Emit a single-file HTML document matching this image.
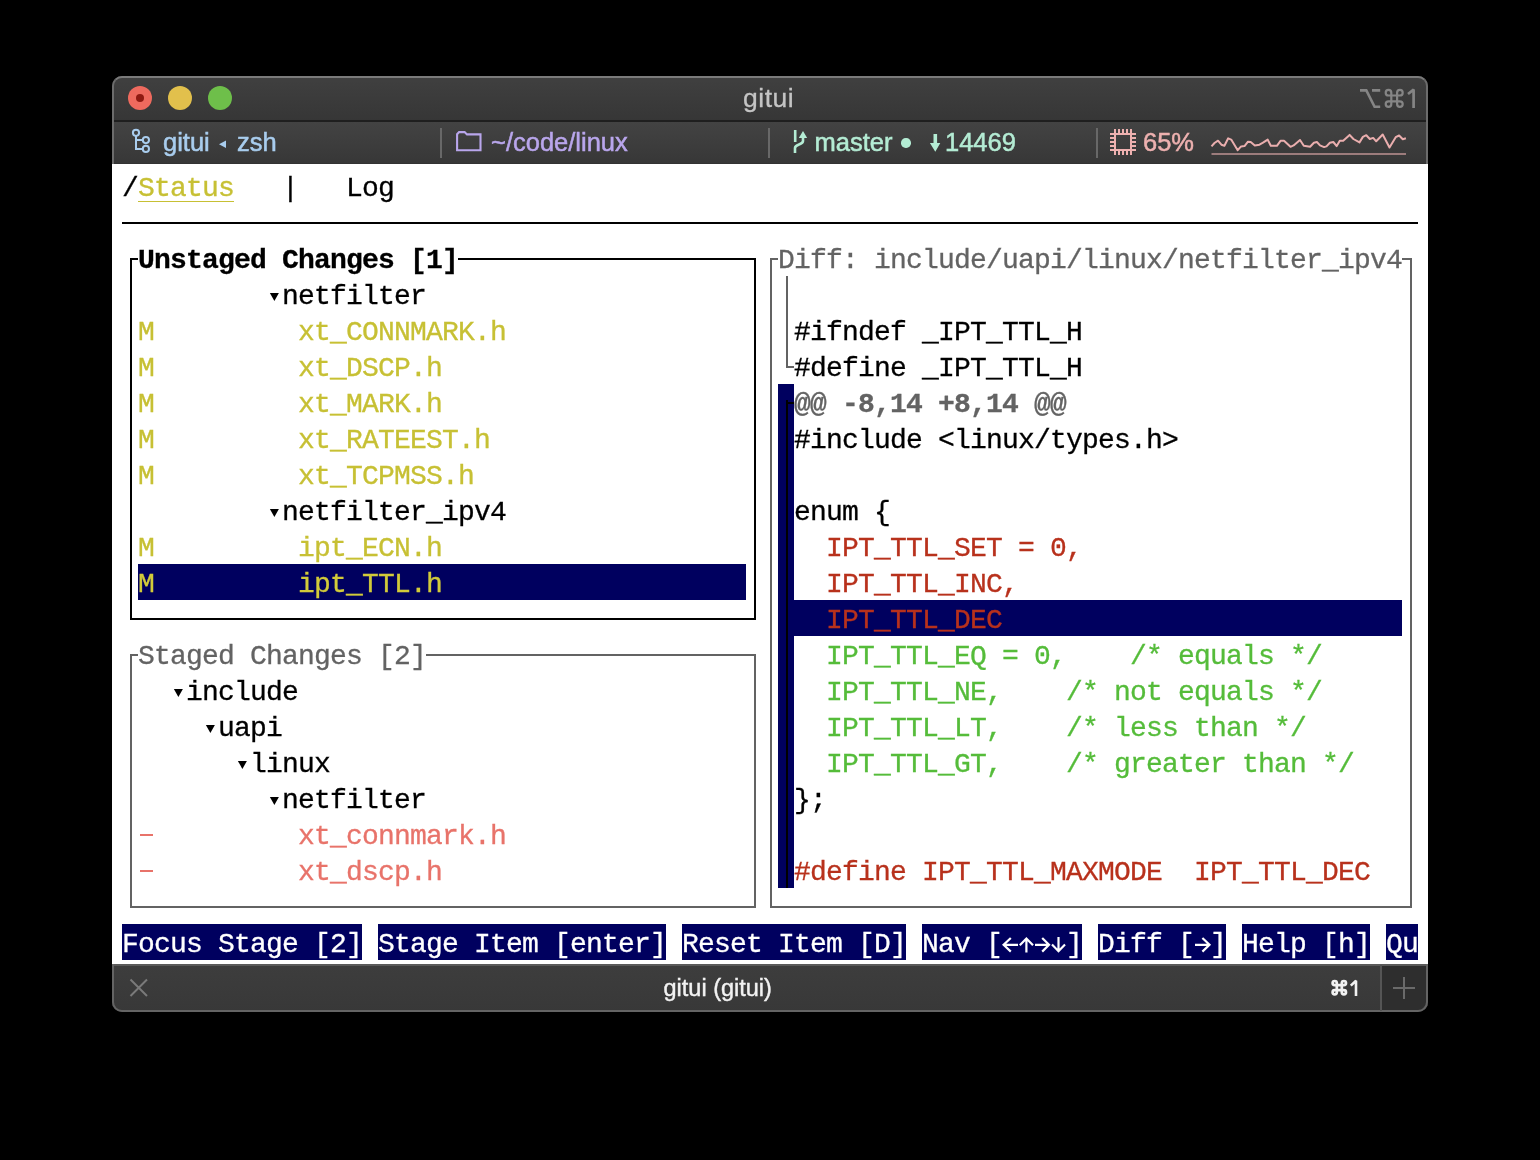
<!DOCTYPE html>
<html><head><meta charset="utf-8">
<style>
html,body{margin:0;padding:0;background:#000;width:1540px;height:1160px;overflow:hidden;}
body{position:relative;will-change:transform;font-family:"Liberation Sans",sans-serif;}
.r{position:absolute;height:36px;line-height:36px;white-space:pre;font-family:"Liberation Mono",monospace;font-size:28px;letter-spacing:-0.8px;-webkit-text-stroke:0.3px currentColor;}
.win{position:absolute;left:112px;top:76px;width:1316px;height:936px;border-radius:10px;overflow:hidden;background:#3a3a3a;}
.frame{position:absolute;box-sizing:border-box;pointer-events:none;}
.sb{position:absolute;font-size:24px;line-height:30px;white-space:pre;}
.tb{top:127px;font-size:25.5px;-webkit-text-stroke:0.5px currentColor;}
</style></head><body>
<div class="win">
  <div style="position:absolute;left:0;top:0;width:1316px;height:45px;background:linear-gradient(#404040,#363636);"></div>
  <div style="position:absolute;left:0;top:44px;width:1316px;height:2px;background:#1f1f1f;"></div>
  <div style="position:absolute;left:0;top:46px;width:1316px;height:42px;background:linear-gradient(#434343,#373737);"></div>
  <div style="position:absolute;left:0;top:87px;width:1316px;height:1px;background:#333;"></div>
  <div style="position:absolute;left:0;top:88px;width:1316px;height:800px;background:#ffffff;"></div>
  <div style="position:absolute;left:0;top:888px;width:1316px;height:48px;background:linear-gradient(#3d3d3d,#383838);border-top:2px solid #5a5a5a;box-sizing:border-box;"></div>
  <div style="position:absolute;left:1270px;top:890px;width:46px;height:46px;background:#2e2e2e;"></div>
</div>
<div class="frame" style="left:112px;top:76px;width:1316px;height:88px;border:2px solid #6c6c6c;border-top-color:#7a7a7a;border-bottom:none;border-radius:10px 10px 0 0;"></div>
<div class="frame" style="left:112px;top:964px;width:1316px;height:48px;border:2px solid #646464;border-top:none;border-radius:0 0 10px 10px;"></div>
<!-- traffic lights -->
<div style="position:absolute;left:128px;top:86px;width:24px;height:24px;border-radius:50%;background:#ee6a5e;"></div>
<div style="position:absolute;left:136px;top:94px;width:8px;height:8px;border-radius:50%;background:#8f1a12;"></div>
<div style="position:absolute;left:168px;top:86px;width:24px;height:24px;border-radius:50%;background:#e2c04c;"></div>
<div style="position:absolute;left:208px;top:86px;width:24px;height:24px;border-radius:50%;background:#6ebf4a;"></div>
<div class="sb" style="left:743px;top:83px;font-size:26.5px;letter-spacing:0.5px;color:#c4c4c4;-webkit-text-stroke:0.3px currentColor;">gitui</div>
<svg style="position:absolute;left:0;top:0" width="1540" height="1160" fill="none">
<path d="M1360,90.4 H1366.3 L1374.6,106.8 H1380.2 M1372,90.4 H1380.2" stroke="#858585" stroke-width="2.6"/>
<path d="M1391.3,92.7 A2.8,2.8 0 1 0 1388.5,95.5 H1399.8999999999999 A2.8,2.8 0 1 0 1397.1,92.7 V104.1 A2.8,2.8 0 1 0 1399.8999999999999,101.3 H1388.5 A2.8,2.8 0 1 0 1391.3,104.1 Z" stroke="#858585" stroke-width="2.2"/>
<path d="M1408,94 L1413.6,89.6 V108.1" stroke="#858585" stroke-width="2.7" stroke-linejoin="bevel"/>
<path d="M1336.8,983.1 A2.1,2.1 0 1 0 1334.7,985.2 H1343.8999999999999 A2.1,2.1 0 1 0 1341.8,983.1 V992.3000000000001 A2.1,2.1 0 1 0 1343.8999999999999,990.2 H1334.7 A2.1,2.1 0 1 0 1336.8,992.3000000000001 Z" stroke="#f2f2f2" stroke-width="2.7"/>
<path d="M1350.8,985.6 L1356,980.8 V996.1" stroke="#f2f2f2" stroke-width="2.6" stroke-linejoin="bevel"/>
</svg>
<!-- status bar -->
<div class="sb tb" style="left:163px;color:#a9cdee;">gitui</div>
<div class="sb tb" style="left:237px;color:#a9cdee;">zsh</div>
<svg style="position:absolute;left:0;top:0" width="1540" height="1160"><path d="M219 144.2 L226 140.5 V148 Z" fill="#a9cdee"/></svg>
<div class="sb tb" style="left:491px;color:#b9a6ec;">~/code/linux</div>
<div class="sb tb" style="left:814.5px;color:#b4ecd4;">master</div>
<div style="position:absolute;left:901.3px;top:138.3px;width:9.4px;height:9.4px;border-radius:50%;background:#b4ecd4;"></div>
<svg style="position:absolute;left:0;top:0" width="1540" height="1160"><path d="M933.5 134 H937.1 V143 H940.3 L935.3 151.8 L929.9 143 H933.5 Z" fill="#b4ecd4"/></svg>
<div class="sb tb" style="left:945px;color:#b4ecd4;">14469</div>
<div class="sb tb" style="left:1143px;color:#eeb1b0;">65%</div>
<div style="position:absolute;left:440px;top:128px;width:2px;height:30px;background:#686868;"></div>
<div style="position:absolute;left:768px;top:128px;width:2px;height:30px;background:#686868;"></div>
<div style="position:absolute;left:1096px;top:128px;width:2px;height:30px;background:#686868;"></div>

<svg style="position:absolute;left:0;top:0" width="1540" height="1160" viewBox="0 0 1540 1160">
  <!-- tree icon -->
  <g fill="none" stroke="#a9cdee" stroke-width="2">
    <circle cx="136" cy="132.8" r="3.1"/>
    <circle cx="145.9" cy="140.1" r="3.1"/>
    <circle cx="145.9" cy="148.9" r="3.1"/>
    <path d="M136 136 V148.9 H142.8 M136 140.1 H142.8"/>
  </g>
  <!-- folder -->
  <path d="M457.1 150.3 V134.2 L459.1 132.1 H464.6 L467 134.4 H480.5 V150.3 Z" fill="none" stroke="#b9a6ec" stroke-width="2.1"/>
  <!-- branch -->
  <g fill="none" stroke="#b4ecd4" stroke-width="2.6">
    <path d="M795.2 130 V142"/>
    <path d="M795 153 V148 C795 144 803 145 803 141 V137"/>
  </g>
  <path d="M803 131 L807.2 138 H798.8 Z" fill="#b4ecd4"/>
  <!-- cpu -->
  <g fill="#eeb1b0">
    <path d="M1114 133 H1132 V151 H1114 Z M1116 135 V149 H1130 V135 Z" fill-rule="evenodd"/>
    <rect x="1114" y="129" width="2" height="4"/><rect x="1118" y="129" width="2" height="4"/><rect x="1122" y="129" width="2" height="4"/><rect x="1126" y="129" width="2" height="4"/><rect x="1130" y="129" width="2" height="4"/>
    <rect x="1114" y="151" width="2" height="4"/><rect x="1118" y="151" width="2" height="4"/><rect x="1122" y="151" width="2" height="4"/><rect x="1126" y="151" width="2" height="4"/><rect x="1130" y="151" width="2" height="4"/>
    <rect x="1110" y="133" width="4" height="2"/><rect x="1110" y="137" width="4" height="2"/><rect x="1110" y="141" width="4" height="2"/><rect x="1110" y="145" width="4" height="2"/><rect x="1110" y="149" width="4" height="2"/>
    <rect x="1132" y="133" width="4" height="2"/><rect x="1132" y="137" width="4" height="2"/><rect x="1132" y="141" width="4" height="2"/><rect x="1132" y="145" width="4" height="2"/><rect x="1132" y="149" width="4" height="2"/>
  </g>
  <!-- sparkline -->
  <rect x="1211.5" y="153" width="194.5" height="2" fill="#9c7c7c"/>
  <polyline fill="none" stroke="#eaaeae" stroke-width="2" stroke-linejoin="round" points="1211.5,146.4 1214.5,143 1218,140.7 1221.4,144.7 1224.4,145.8 1228.2,138.3 1231.2,139.6 1237.7,150.2 1241.1,146.4 1244.5,146.1 1248,141.7 1250.7,142 1254.8,145.4 1259.5,144.7 1263,142.7 1267.7,139.6 1270.8,145.8 1276.9,145.8 1280.7,140.7 1284,140.7 1290.5,146.8 1293.6,145.4 1300,140 1303.8,145.8 1310.1,146.8 1313.9,142.7 1316.9,142 1320,145.4 1324.1,147.1 1326.5,146.4 1329.9,142.7 1333.3,142 1336.7,146.1 1339.8,140.7 1343.2,140.7 1349.6,134.9 1353.4,139 1359.5,142.4 1362.9,136.9 1366.3,135.2 1369.8,139 1373.2,137.9 1376.2,141.3 1382.7,134.5 1389.5,147.5 1395.7,137.2 1399.1,135.5 1402.8,139.3 1405.9,138.3"/>
  <!-- bottom x and + -->
  <path d="M130.5 979.5 L147 996 M147 979.5 L130.5 996" stroke="#7a7a7a" stroke-width="2"/>
  <path d="M1404 977 V999 M1393 988 H1415" stroke="#6a6a6a" stroke-width="2"/>
</svg>

<!-- bottom bar -->
<div class="sb" style="left:663.5px;top:973px;font-size:23.5px;color:#f2f2f2;-webkit-text-stroke:0.4px currentColor;">gitui (gitui)</div>

<div style="position:absolute;left:1380px;top:965px;width:2px;height:46px;background:#555;"></div>
<div class="r" style="left:122px;top:170.5px"><span style="color:#000000;">/</span><span style="color:#c7c034;">Status</span><span style="color:#000000;">   |   </span><span style="color:#000000;">Log</span></div>
<div style="position:absolute;left:122px;top:222px;width:1296px;height:2px;background:#000000;"></div>
<div style="position:absolute;left:138px;top:201px;width:96px;height:1.2px;background:#c7c034;"></div>
<div style="position:absolute;left:130px;top:258px;width:626px;height:2px;background:#000000;"></div>
<div style="position:absolute;left:130px;top:618px;width:626px;height:2px;background:#000000;"></div>
<div style="position:absolute;left:130px;top:258px;width:2px;height:362px;background:#000000;"></div>
<div style="position:absolute;left:754px;top:258px;width:2px;height:362px;background:#000000;"></div>
<div style="position:absolute;left:130px;top:654px;width:626px;height:2px;background:#636363;"></div>
<div style="position:absolute;left:130px;top:906px;width:626px;height:2px;background:#636363;"></div>
<div style="position:absolute;left:130px;top:654px;width:2px;height:254px;background:#636363;"></div>
<div style="position:absolute;left:754px;top:654px;width:2px;height:254px;background:#636363;"></div>
<div style="position:absolute;left:770px;top:258px;width:642px;height:2px;background:#636363;"></div>
<div style="position:absolute;left:770px;top:906px;width:642px;height:2px;background:#636363;"></div>
<div style="position:absolute;left:770px;top:258px;width:2px;height:650px;background:#636363;"></div>
<div style="position:absolute;left:1410px;top:258px;width:2px;height:650px;background:#636363;"></div>
<div style="position:absolute;left:138px;top:564px;width:608px;height:36px;background:#00005f;"></div>
<div style="position:absolute;left:794px;top:600px;width:608px;height:36px;background:#00005f;"></div>
<div style="position:absolute;left:778px;top:384px;width:16px;height:504px;background:#00005f;"></div>
<div style="position:absolute;left:138px;top:244px;width:320px;height:28px;background:#ffffff;"></div>
<div class="r" style="left:138px;top:242.5px"><span style="color:#000000;font-weight:bold;">Unstaged Changes [1]</span></div>
<div style="position:absolute;left:138px;top:640px;width:288px;height:28px;background:#ffffff;"></div>
<div class="r" style="left:138px;top:638.5px"><span style="color:#636363;">Staged Changes [2]</span></div>
<div style="position:absolute;left:778px;top:244px;width:624px;height:28px;background:#ffffff;"></div>
<div class="r" style="left:778px;top:242.5px"><span style="color:#636363;">Diff: include/uapi/linux/netfilter_ipv4</span></div>
<svg style="position:absolute;left:266px;top:276px" width="16" height="36"><path d="M3.9,16.9 H12.9 L8.4,25.1 Z" fill="#000"/></svg>
<div class="r" style="left:282px;top:278.5px"><span style="color:#000000;">netfilter</span></div>
<div class="r" style="left:138px;top:314.5px"><span style="color:#c7c034;">M</span><span style="color:#c7c034;">         xt_CONNMARK.h</span></div>
<div class="r" style="left:138px;top:350.5px"><span style="color:#c7c034;">M</span><span style="color:#c7c034;">         xt_DSCP.h</span></div>
<div class="r" style="left:138px;top:386.5px"><span style="color:#c7c034;">M</span><span style="color:#c7c034;">         xt_MARK.h</span></div>
<div class="r" style="left:138px;top:422.5px"><span style="color:#c7c034;">M</span><span style="color:#c7c034;">         xt_RATEEST.h</span></div>
<div class="r" style="left:138px;top:458.5px"><span style="color:#c7c034;">M</span><span style="color:#c7c034;">         xt_TCPMSS.h</span></div>
<svg style="position:absolute;left:266px;top:492px" width="16" height="36"><path d="M3.9,16.9 H12.9 L8.4,25.1 Z" fill="#000"/></svg>
<div class="r" style="left:282px;top:494.5px"><span style="color:#000000;">netfilter_ipv4</span></div>
<div class="r" style="left:138px;top:530.5px"><span style="color:#c7c034;">M</span><span style="color:#c7c034;">         ipt_ECN.h</span></div>
<div class="r" style="left:138px;top:566.5px"><span style="color:#d2cb3a;">M</span><span style="color:#d2cb3a;">         ipt_TTL.h</span></div>
<svg style="position:absolute;left:170px;top:672px" width="16" height="36"><path d="M3.9,16.9 H12.9 L8.4,25.1 Z" fill="#000"/></svg>
<div class="r" style="left:186px;top:674.5px"><span style="color:#000000;">include</span></div>
<svg style="position:absolute;left:202px;top:708px" width="16" height="36"><path d="M3.9,16.9 H12.9 L8.4,25.1 Z" fill="#000"/></svg>
<div class="r" style="left:218px;top:710.5px"><span style="color:#000000;">uapi</span></div>
<svg style="position:absolute;left:234px;top:744px" width="16" height="36"><path d="M3.9,16.9 H12.9 L8.4,25.1 Z" fill="#000"/></svg>
<div class="r" style="left:250px;top:746.5px"><span style="color:#000000;">linux</span></div>
<svg style="position:absolute;left:266px;top:780px" width="16" height="36"><path d="M3.9,16.9 H12.9 L8.4,25.1 Z" fill="#000"/></svg>
<div class="r" style="left:282px;top:782.5px"><span style="color:#000000;">netfilter</span></div>
<div style="position:absolute;left:140px;top:834px;width:12.6px;height:2px;background:#e8736a;"></div>
<div style="position:absolute;left:140px;top:870px;width:12.6px;height:2px;background:#e8736a;"></div>
<div class="r" style="left:298px;top:818.5px"><span style="color:#e8736a;">xt_connmark.h</span></div>
<div class="r" style="left:298px;top:854.5px"><span style="color:#e8736a;">xt_dscp.h</span></div>
<div style="position:absolute;left:786px;top:276px;width:2px;height:90px;background:#636363;"></div>
<div style="position:absolute;left:786px;top:366px;width:8px;height:2px;background:#636363;"></div>
<div style="position:absolute;left:786px;top:400px;width:2px;height:488px;background:#000000;"></div>
<div style="position:absolute;left:786px;top:402px;width:8px;height:2px;background:#000000;"></div>
<div class="r" style="left:794px;top:314.5px"><span style="color:#000000;">#ifndef _IPT_TTL_H</span></div>
<div class="r" style="left:794px;top:350.5px"><span style="color:#000000;">#define _IPT_TTL_H</span></div>
<div class="r" style="left:794px;top:386.5px"><span style="color:#636363;font-weight:bold;">@@ -8,14 +8,14 @@</span></div>
<div class="r" style="left:794px;top:422.5px"><span style="color:#000000;">#include &lt;linux/types.h&gt;</span></div>
<div class="r" style="left:794px;top:494.5px"><span style="color:#000000;">enum {</span></div>
<div class="r" style="left:794px;top:530.5px"><span style="color:#b8311c;">  IPT_TTL_SET = 0,</span></div>
<div class="r" style="left:794px;top:566.5px"><span style="color:#b8311c;">  IPT_TTL_INC,</span></div>
<div class="r" style="left:794px;top:602.5px"><span style="color:#b8311c;">  IPT_TTL_DEC</span></div>
<div class="r" style="left:794px;top:638.5px"><span style="color:#55bc3a;">  IPT_TTL_EQ = 0,    /* equals */</span></div>
<div class="r" style="left:794px;top:674.5px"><span style="color:#55bc3a;">  IPT_TTL_NE,    /* not equals */</span></div>
<div class="r" style="left:794px;top:710.5px"><span style="color:#55bc3a;">  IPT_TTL_LT,    /* less than */</span></div>
<div class="r" style="left:794px;top:746.5px"><span style="color:#55bc3a;">  IPT_TTL_GT,    /* greater than */</span></div>
<div class="r" style="left:794px;top:782.5px"><span style="color:#000000;">};</span></div>
<div class="r" style="left:794px;top:854.5px"><span style="color:#b8311c;">#define IPT_TTL_MAXMODE  IPT_TTL_DEC</span></div>
<div style="position:absolute;left:122px;top:924px;width:240px;height:36px;background:#00005f;"></div>
<div class="r" style="left:122px;top:926.5px"><span style="color:#ffffff;">Focus Stage [2]</span></div>
<div style="position:absolute;left:378px;top:924px;width:288px;height:36px;background:#00005f;"></div>
<div class="r" style="left:378px;top:926.5px"><span style="color:#ffffff;">Stage Item [enter]</span></div>
<div style="position:absolute;left:682px;top:924px;width:224px;height:36px;background:#00005f;"></div>
<div class="r" style="left:682px;top:926.5px"><span style="color:#ffffff;">Reset Item [D]</span></div>
<div style="position:absolute;left:922px;top:924px;width:160px;height:36px;background:#00005f;"></div>
<div class="r" style="left:922px;top:926.5px"><span style="color:#ffffff;">Nav [    ]</span></div>
<div style="position:absolute;left:1098px;top:924px;width:128px;height:36px;background:#00005f;"></div>
<div class="r" style="left:1098px;top:926.5px"><span style="color:#ffffff;">Diff [ ]</span></div>
<div style="position:absolute;left:1242px;top:924px;width:128px;height:36px;background:#00005f;"></div>
<div class="r" style="left:1242px;top:926.5px"><span style="color:#ffffff;">Help [h]</span></div>
<div style="position:absolute;left:1386px;top:924px;width:32px;height:36px;background:#00005f;"></div>
<div class="r" style="left:1386px;top:926.5px"><span style="color:#ffffff;">Qu</span></div>
<svg style="position:absolute;left:0;top:0" width="1540" height="1160" fill="none" stroke="#fff" stroke-width="2.2">
<path d="M1003,944.8 H1018 M1010.8,938 L1003.6,944.8 L1010.8,951.6"/>
<path d="M1026.4,938 V952.6 M1019.8,945.3 L1026.4,938.6 L1033,945.3"/>
<path d="M1035,944.8 H1049 M1042.2,938 L1049,944.8 L1042.2,951.6"/>
<path d="M1058.5,937 V951.5 M1052,944.6 L1058.5,951.2 L1065,944.6"/>
<path d="M1195,944.8 H1209.5 M1202.4,938 L1209.5,944.8 L1202.4,951.6"/>
</svg>
</body></html>
